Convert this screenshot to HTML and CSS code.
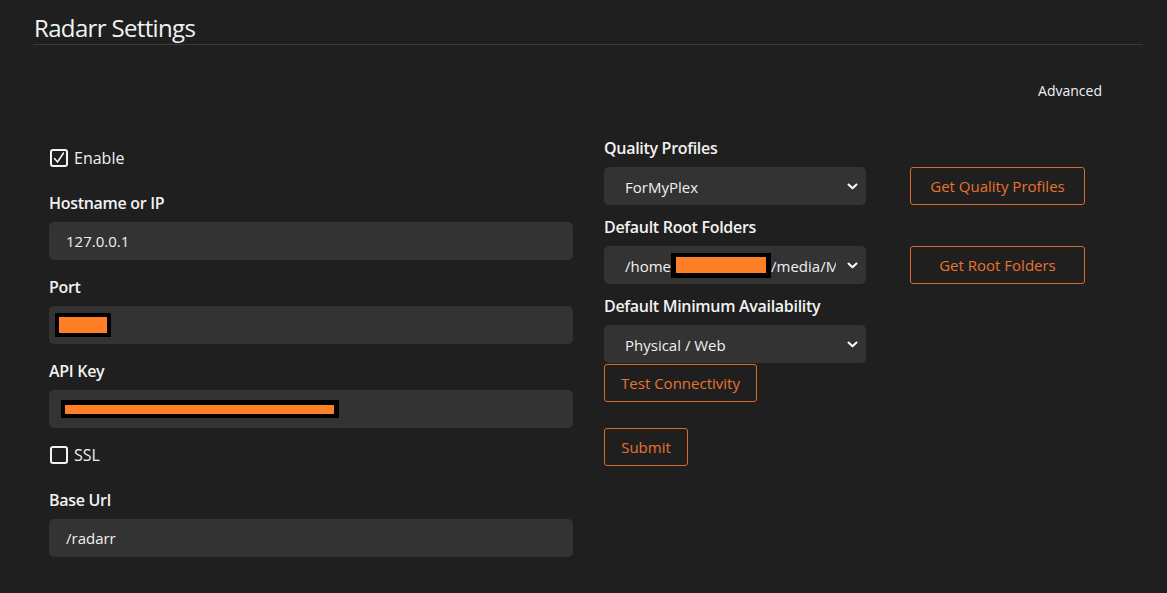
FILE: index.html
```html
<!DOCTYPE html>
<html>
<head>
<meta charset="utf-8">
<link rel="stylesheet" href="styles.css">
</head>
<body>
<div class="page">
  <h1 class="title">Radarr Settings</h1>
  <div class="adv-row"><span class="adv">Advanced</span></div>
  <div class="form">
    <div class="col-left">
      <label class="check-row">
        <span class="box">
          <svg width="14" height="14" viewBox="0 0 14 14"><path d="M2.5 7.5 L5.5 11 L11.5 2" fill="none" stroke="#fff" stroke-width="1.4" stroke-linecap="round" stroke-linejoin="round"/></svg>
        </span>
        <span class="check-text">Enable</span>
      </label>
      <div class="field first">
        <div class="label">Hostname or IP</div>
        <div class="input">127.0.0.1</div>
      </div>
      <div class="field">
        <div class="label">Port</div>
        <div class="input"><span class="redact redact-port"></span></div>
      </div>
      <div class="field">
        <div class="label">API Key</div>
        <div class="input"><span class="redact redact-key"></span></div>
      </div>
      <label class="check-row ssl">
        <span class="box"></span>
        <span class="check-text">SSL</span>
      </label>
      <div class="field base">
        <div class="label">Base Url</div>
        <div class="input">/radarr</div>
      </div>
    </div>
    <div class="col-right">
      <div class="label">Quality Profiles</div>
      <div class="sel-row">
        <div class="select"><span class="sel-text">ForMyPlex</span><svg class="chev" width="11" height="7" viewBox="0 0 11 7"><path d="M1.5 1.5 L5.5 5.3 L9.5 1.5" fill="none" stroke="#fff" stroke-width="2" stroke-linecap="round" stroke-linejoin="round"/></svg></div>
        <button class="btn btn-side">Get Quality Profiles</button>
      </div>
      <div class="label gap">Default Root Folders</div>
      <div class="sel-row">
        <div class="select"><span class="sel-text">/home<span class="redact redact-folder"></span>/media/Movies</span><svg class="chev" width="11" height="7" viewBox="0 0 11 7"><path d="M1.5 1.5 L5.5 5.3 L9.5 1.5" fill="none" stroke="#fff" stroke-width="2" stroke-linecap="round" stroke-linejoin="round"/></svg></div>
        <button class="btn btn-side">Get Root Folders</button>
      </div>
      <div class="label gap">Default Minimum Availability</div>
      <div class="sel-row">
        <div class="select"><span class="sel-text">Physical / Web</span><svg class="chev" width="11" height="7" viewBox="0 0 11 7"><path d="M1.5 1.5 L5.5 5.3 L9.5 1.5" fill="none" stroke="#fff" stroke-width="2" stroke-linecap="round" stroke-linejoin="round"/></svg></div>
      </div>
      <div class="btn-col">
        <button class="btn btn-test">Test Connectivity</button>
        <button class="btn btn-submit">Submit</button>
      </div>
    </div>
  </div>
</div>
</body>
</html>
```

FILE: styles.css
```css
html, body {
  margin: 0;
  padding: 0;
  background: #1f1f1f;
  color: #eeeeee;
  font-family: "Open Sans", "Liberation Sans", sans-serif;
}
.page {
  padding-left: 33px;
  width: 1110px;
}
.title {
  margin: 0;
  padding-top: 12px;
  padding-left: 1px;
  font-size: 24px;
  font-weight: 400;
  line-height: 32px;
  letter-spacing: -0.65px;
  color: #f2f2f2;
  border-bottom: 1px solid #3b3b3b;
  height: 32px;
}
.adv-row {
  display: flex;
  justify-content: flex-end;
  margin-top: 36px;
  padding-right: 41px;
  line-height: 20px;
  height: 20px;
}
.adv {
  font-size: 14px;
  color: #f2f2f2;
}
.form {
  display: flex;
  margin-top: 35px;
  padding-left: 16px;
}
.col-left {
  width: 524px;
  padding-top: 13px;
}
.col-right {
  margin-left: 31px;
  width: 490px;
}
.check-row {
  display: flex;
  align-items: center;
  height: 18px;
}
.box {
  box-sizing: border-box;
  width: 18px;
  height: 18px;
  border: 2px solid #f2f2f2;
  border-radius: 3px;
  margin-left: 1px;
  display: flex;
  align-items: center;
  justify-content: center;
}
.check-text {
  margin-left: 6px;
  font-size: 16px;
  color: #f0f0f0;
}
.label {
  font-size: 16px;
  font-weight: 600;
  line-height: 24px;
  color: #f2f2f2;
  letter-spacing: -0.3px;
}
.field {
  margin-top: 15px;
}
.field.first {
  margin-top: 24px;
}
.field .label {
  margin-bottom: 7px;
}
.check-row.ssl {
  margin-top: 18px;
}
.field.base {
  margin-top: 24px;
}
.input {
  box-sizing: border-box;
  height: 38px;
  background: #333333;
  border-radius: 5px;
  padding-left: 17px;
  display: flex;
  align-items: center;
  font-size: 15px;
  color: #f0f0f0;
}
.redact {
  display: inline-block;
  box-sizing: content-box;
  background: #ff7f27;
  border-style: solid;
  border-color: #000;
}
.redact-port {
  width: 48px;
  height: 16px;
  border-width: 4px;
  margin-left: -11px;
}
.redact-key {
  width: 269px;
  height: 9px;
  border-width: 5px 5px 4px 4px;
  margin-left: -5px;
}
.redact-folder {
  width: 90px;
  height: 16px;
  border-width: 4px 5px 5px 5px;
  vertical-align: middle;
  margin-top: -3px;
}
.sel-row {
  display: flex;
  align-items: center;
  margin-top: 7px;
}
.label.gap {
  margin-top: 10px;
}
.select {
  box-sizing: border-box;
  width: 262px;
  height: 38px;
  background: #333333;
  border-radius: 5px;
  padding-left: 21px;
  padding-right: 8px;
  display: flex;
  align-items: center;
  font-size: 15px;
  color: #f0f0f0;
}
.sel-text {
  flex: 1;
  white-space: nowrap;
  overflow: hidden;
  margin-right: 11px;
  line-height: 38px;
  padding-top: 1px;
}
.chev {
  flex: none;
}
.btn {
  box-sizing: border-box;
  height: 38px;
  background: transparent;
  border: 1px solid #d9692c;
  border-radius: 3px;
  color: #e8732f;
  font-family: "Open Sans", "Liberation Sans", sans-serif;
  font-size: 15px;
  padding: 0;
}
.btn-side {
  width: 175px;
  margin-left: 44px;
}
.btn-col {
  display: flex;
  flex-direction: column;
  align-items: flex-start;
  margin-top: 1px;
}
.btn-test {
  width: 153px;
}
.btn-submit {
  width: 84px;
  margin-top: 26px;
}
```
